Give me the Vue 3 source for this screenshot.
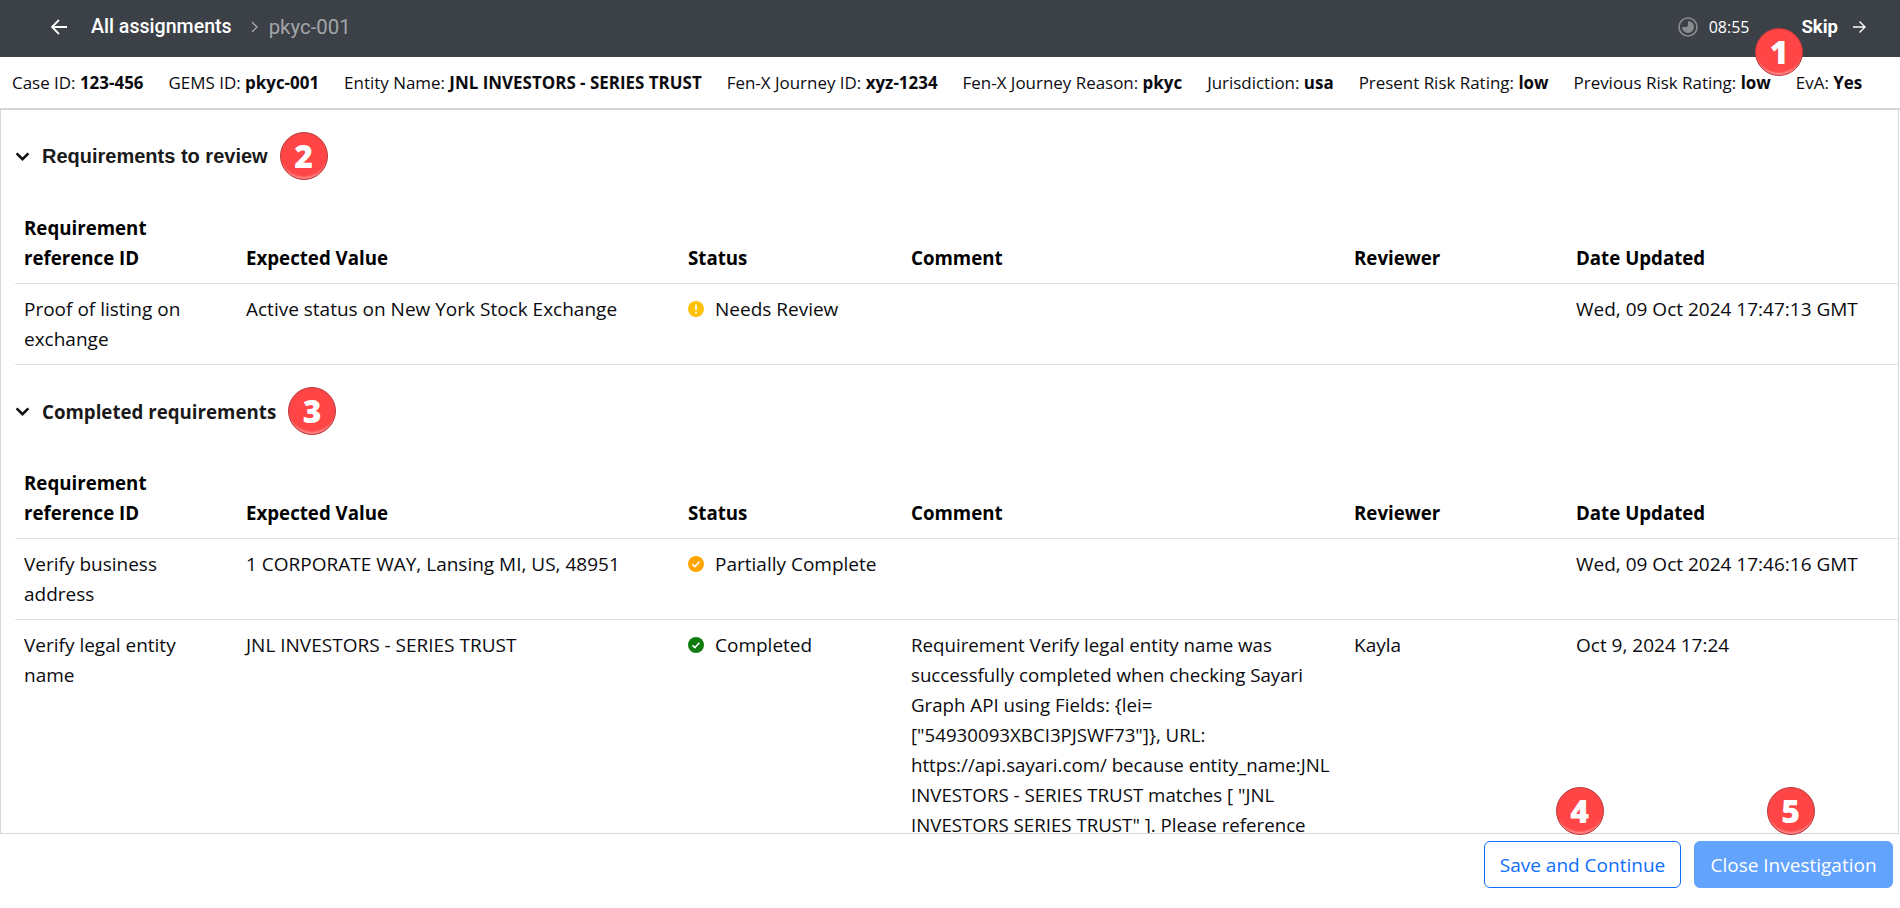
<template>
  <div class="page">
    <header class="topbar">
      <svg class="back" width="20" height="20" viewBox="0 0 20 20" fill="none" stroke="#fff" stroke-width="1.8">
        <path d="M18 10H3M10 3l-7 7 7 7" />
      </svg>
      <span class="crumb">All assignments</span>
      <svg class="crumb-sep" width="10" height="14" viewBox="0 0 10 14" fill="none" stroke="#a3a6a9" stroke-width="1.4">
        <path d="M2 2l5 5-5 5" />
      </svg>
      <span class="crumb-current">pkyc-001</span>
      <div class="spacer"></div>
      <svg class="clock" width="20" height="20" viewBox="0 0 20 20">
        <circle cx="10" cy="10" r="9" fill="none" stroke="#8a8c8f" stroke-width="1.6" />
        <path d="M10 4a6 6 0 1 1-6 6h4a2 2 0 0 0 2-2z" fill="#8a8c8f" />
      </svg>
      <span class="time">08:55</span>
      <span class="skip">Skip</span>
      <svg class="forward" width="16" height="16" viewBox="0 0 16 16" fill="none" stroke="#fff" stroke-width="1.4">
        <path d="M2 8h12M8.5 2.5L14 8l-5.500 5.500" />
      </svg>
    </header>

    <div class="info-bar">
      <span v-for="item in caseInfo" :key="item.label" class="info-item">
        {{ item.label }}: <b>{{ item.value }}</b>
      </span>
    </div>

    <main class="panel">
      <section v-for="section in sections" :key="section.title">
        <div class="section-head" :class="{ alt: section.badge === 3 }">
          <svg width="15" height="11" viewBox="0 0 14 10" fill="none" stroke="#111" stroke-width="2.4">
            <path d="M1.500 2l5.500 5.500L12.500 2" />
          </svg>
          <h2>{{ section.title }}</h2>
          <span class="badge inline">{{ section.badge }}</span>
        </div>
        <table>
          <colgroup>
            <col v-for="w in colWidths" :key="w.id" :style="{ width: w.px + 'px' }" />
          </colgroup>
          <thead>
            <tr>
              <th>Requirement reference ID</th>
              <th>Expected Value</th>
              <th>Status</th>
              <th>Comment</th>
              <th>Reviewer</th>
              <th>Date Updated</th>
            </tr>
          </thead>
          <tbody>
            <tr v-for="row in section.rows" :key="row.id">
              <td>{{ row.id }}</td>
              <td>{{ row.expected }}</td>
              <td>
                <span class="status">
                  <svg width="16" height="16" viewBox="0 0 16 16">
                    <circle cx="8" cy="8" r="8" :fill="statusColors[row.status]" />
                    <path v-if="row.status === 'Needs Review'" d="M8 3.500v5.500M8 10.800v1.800" stroke="#fff" stroke-width="1.700" fill="none" />
                    <path v-else d="M4.500 8.300l2.400 2.300 4.500-4.800" stroke="#fff" stroke-width="1.600" fill="none" />
                  </svg>
                  {{ row.status }}
                </span>
              </td>
              <td class="comment">
                <span v-for="line in row.comment" :key="line">{{ line }}</span>
              </td>
              <td>{{ row.reviewer }}</td>
              <td>{{ row.date }}</td>
            </tr>
          </tbody>
        </table>
      </section>
    </main>

    <footer class="actions">
      <div class="btn-wrap">
        <button class="btn outline">Save and Continue</button>
        <span class="badge over">4</span>
      </div>
      <div class="btn-wrap">
        <button class="btn solid">Close Investigation</button>
        <span class="badge over">5</span>
      </div>
    </footer>

    <span class="badge first">1</span>
  </div>
</template>

<script setup>
const caseInfo = [
  { label: "Case ID", value: "123-456" },
  { label: "GEMS ID", value: "pkyc-001" },
  { label: "Entity Name", value: "JNL INVESTORS - SERIES TRUST" },
  { label: "Fen-X Journey ID", value: "xyz-1234" },
  { label: "Fen-X Journey Reason", value: "pkyc" },
  { label: "Jurisdiction", value: "usa" },
  { label: "Present Risk Rating", value: "low" },
  { label: "Previous Risk Rating", value: "low" },
  { label: "EvA", value: "Yes" },
];

const colWidths = [
  { id: "req", px: 222 },
  { id: "exp", px: 442 },
  { id: "status", px: 223 },
  { id: "comment", px: 443 },
  { id: "reviewer", px: 222 },
  { id: "date", px: 331 },
];

const statusColors = {
  "Needs Review": "#ffc107",
  "Partially Complete": "#ffa500",
  Completed: "#107c10",
};

const sections = [
  {
    title: "Requirements to review",
    badge: 2,
    rows: [
      {
        id: "Proof of listing on exchange",
        expected: "Active status on New York Stock Exchange",
        status: "Needs Review",
        comment: [],
        reviewer: "",
        date: "Wed, 09 Oct 2024 17:47:13 GMT",
      },
    ],
  },
  {
    title: "Completed requirements",
    badge: 3,
    rows: [
      {
        id: "Verify business address",
        expected: "1 CORPORATE WAY, Lansing MI, US, 48951",
        status: "Partially Complete",
        comment: [],
        reviewer: "",
        date: "Wed, 09 Oct 2024 17:46:16 GMT",
      },
      {
        id: "Verify legal entity name",
        expected: "JNL INVESTORS - SERIES TRUST",
        status: "Completed",
        comment: [
          "Requirement Verify legal entity name was",
          "successfully completed when checking Sayari",
          "Graph API using Fields: {lei=",
          '["54930093XBCI3PJSWF73"]}, URL:',
          "https://api.sayari.com/ because entity_name:JNL",
          'INVESTORS - SERIES TRUST matches [ "JNL',
          'INVESTORS SERIES TRUST" ]. Please reference',
        ],
        reviewer: "Kayla",
        date: "Oct 9, 2024 17:24",
      },
    ],
  },
];
</script>

<style>
html,
body {
  margin: 0;
  background: #fff;
}
</style>

<style scoped>
.page {
  position: relative;
  height: 908px;
  display: flex;
  flex-direction: column;
  overflow: hidden;
  font-family: "Open Sans", "Noto Sans", sans-serif;
  color: #0b0b0f;
}

.topbar {
  height: 57px;
  flex: none;
  box-sizing: border-box;
  padding: 0 33px 4px 49px;
  display: flex;
  align-items: center;
  background-color: #3c4047;
  color: #fff;
  font-family: Roboto, sans-serif;
}

.crumb {
  margin-left: 22px;
  font-size: 19.600px;
  font-weight: 500;
}

.crumb-sep {
  margin: 0 9px 0 18px;
}

.crumb-current {
  font-size: 20.400px;
  color: #a3a6a9;
}

.spacer {
  flex: 1;
}

.time {
  margin-left: 11px;
  font-size: 16px;
  font-family: "Open Sans", sans-serif;
}

.skip {
  margin-left: 52px;
  font-size: 18.500px;
  font-weight: 700;
}

.forward {
  margin-left: 13px;
}

.info-bar {
  height: 53px;
  flex: none;
  box-sizing: border-box;
  padding: 0 12px 0 12px;
  display: flex;
  align-items: center;
  gap: 25px;
  border-bottom: 2px solid #d6d6d6;
  font-size: 16.950px;
  white-space: nowrap;
}

.info-item b {
  font-weight: 700;
}

.panel {
  flex: 1;
  min-height: 0;
  overflow: hidden;
  box-sizing: border-box;
  margin-right: 1px;
  border-left: 1px solid #d6d6d6;
  border-right: 1px solid #d6d6d6;
  border-bottom: 1px solid #d6d6d6;
}

.section-head {
  height: 30px;
  padding: 31px 0 32px 14px;
  display: flex;
  align-items: center;
}

.section-head h2 {
  margin: 0 0 0 12px;
  font-family: "Liberation Sans", sans-serif;
  font-size: 20px;
  font-weight: 700;
  color: #1a1a1a;
}

.section-head.alt h2 {
  font-family: "Open Sans", sans-serif;
  font-size: 18.700px;
}

table {
  margin-left: 14px;
  width: 1883px;
  table-layout: fixed;
  border-collapse: collapse;
  font-size: 19px;
  line-height: 30px;
}

th,
td {
  padding: 10px 9px;
  text-align: left;
  vertical-align: top;
  border-bottom: 1px solid #dee2e6;
}

th {
  vertical-align: bottom;
  font-size: 18.700px;
  font-weight: 700;
  color: #000;
}

.comment {
  font-size: 18.700px;
}

.comment span {
  display: block;
  white-space: nowrap;
}

.status {
  display: flex;
  align-items: center;
  gap: 11px;
}

.actions {
  height: 74px;
  flex: none;
  box-sizing: border-box;
  padding: 7px 7px 0 0;
  display: flex;
  justify-content: flex-end;
  gap: 13px;
}

.btn-wrap {
  position: relative;
}

.btn {
  display: block;
  height: 47px;
  box-sizing: border-box;
  border-radius: 6px;
  font-family: "Open Sans", sans-serif;
  font-size: 19px;
  padding: 0;
  border: 1px solid #0d6efd;
}

.btn.outline {
  width: 197px;
  background: #fff;
  color: #0d6efd;
}

.btn.solid {
  width: 199px;
  background: #62a3fe;
  border-color: #62a3fe;
  color: #fff;
}

.badge {
  width: 48px;
  height: 48px;
  box-sizing: border-box;
  border-radius: 50%;
  display: flex;
  align-items: center;
  justify-content: center;
  background: #ff4545;
  border: 1px solid #b93a3e;
  box-shadow: inset 0 -4px 2px -2px #ff8f8f;
  color: #fff;
  font-family: "Open Sans", sans-serif;
  font-size: 32px;
  font-weight: 800;
  line-height: 1;
}

.badge.inline {
  margin-left: 12px;
}

.badge.over {
  position: absolute;
  left: calc(50% - 3px);
  top: -54px;
  transform: translateX(-50%);
}

.badge.first {
  position: absolute;
  left: 1755px;
  top: 28px;
}
</style>
